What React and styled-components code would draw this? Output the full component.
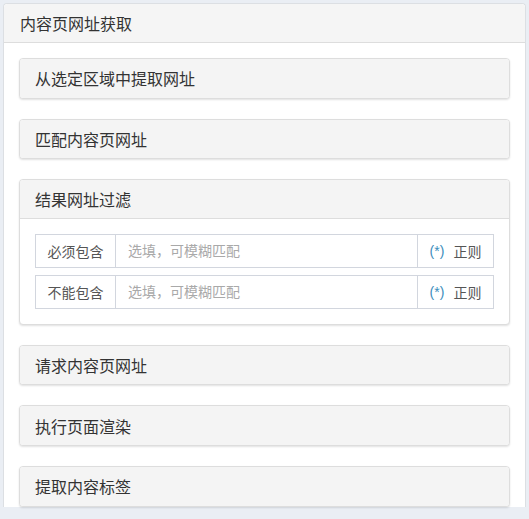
import React from 'react';
import styled, { createGlobalStyle } from 'styled-components';

const GlobalStyle = createGlobalStyle`
    html, body {
        margin: 0;
        padding: 0;
        background: #eaeef4;
        font-family: "Liberation Sans", "Noto Sans CJK SC", sans-serif;
        color: #333;
    }
    * {
        box-sizing: border-box;
    }
`;

const steps = [
    { title: '从选定区域中提取网址' },
    { title: '匹配内容页网址' },
    {
        title: '结果网址过滤',
        filters: ['必须包含', '不能包含'],
    },
    { title: '请求内容页网址' },
    { title: '执行页面渲染' },
    { title: '提取内容标签' },
];

const App = () => {
    return (
        <>
            <GlobalStyle />
            <Page>
                <Outer>
                    <OuterHeading>内容页网址获取</OuterHeading>
                    <OuterBody>
                        {steps.map((step) => (
                            <Panel key={step.title}>
                                <PanelHeading $open={!!step.filters}>{step.title}</PanelHeading>
                                {step.filters && (
                                    <PanelBody>
                                        {step.filters.map((label) => (
                                            <InputGroup key={label}>
                                                <Addon>{label}</Addon>
                                                <Input placeholder="选填，可模糊匹配" />
                                                <Addon $right>
                                                    <Star>(*)</Star>
                                                    <span>正则</span>
                                                </Addon>
                                            </InputGroup>
                                        ))}
                                    </PanelBody>
                                )}
                            </Panel>
                        ))}
                    </OuterBody>
                </Outer>
            </Page>
        </>
    );
};

const Page = styled.div`
    padding: 3px 3px 0 3px;
    height: 519px;
    overflow: hidden;
`;

const Outer = styled.div`
    background: #fff;
    border: 1px solid #dcdfe3;
    border-bottom: none;
    border-radius: 4px 4px 0 0;
`;

const OuterHeading = styled.div`
    height: 39px;
    padding: 0 16px;
    display: flex;
    align-items: center;
    background: #f5f5f5;
    border-bottom: 1px solid #dddddd;
    border-radius: 4px 4px 0 0;
    font-size: 16px;
    color: #333;
`;

const OuterBody = styled.div`
    padding: 15px 15px 0 15px;
`;

const Panel = styled.div`
    border: 1px solid #dddddd;
    border-radius: 4px;
    background: #fff;
    margin-bottom: 20px;
    box-shadow: 0 1px 2px rgba(0, 0, 0, 0.12);
`;

// bootstrap-like heading: 10px padding + 16px title at line-height 1.1
const PanelHeading = styled.div`
    height: 38.6px;
    padding: 0 15px;
    display: flex;
    align-items: center;
    background: #f4f4f4;
    font-size: 16px;
    color: #333;
    border-radius: ${(p) => (p.$open ? '3px 3px 0 0' : '3px')};
    border-bottom: ${(p) => (p.$open ? '1px solid #dddddd' : 'none')};
`;

const PanelBody = styled.div`
    padding: 15px 15px 8px 15px;
`;

const InputGroup = styled.div`
    display: flex;
    height: 34px;
    margin-bottom: 7px;
    border: 1px solid #d2d6de;
`;

const Addon = styled.div`
    flex: none;
    display: flex;
    align-items: center;
    justify-content: center;
    gap: 9px;
    width: ${(p) => (p.$right ? '76px' : '80px')};
    border-left: ${(p) => (p.$right ? '1px solid #d2d6de' : 'none')};
    border-right: ${(p) => (p.$right ? 'none' : '1px solid #d2d6de')};
    font-size: 14px;
    color: #555;
    background: #fff;
`;

const Star = styled.span`
    color: #3c8dbc;
`;

const Input = styled.input`
    flex: 1;
    min-width: 0;
    border: none;
    outline: none;
    padding: 0 12px;
    font-family: inherit;
    font-size: 14px;
    color: #555;
    background: #fff;

    &::placeholder {
        color: #a9a9a9;
    }
`;

export default App;
